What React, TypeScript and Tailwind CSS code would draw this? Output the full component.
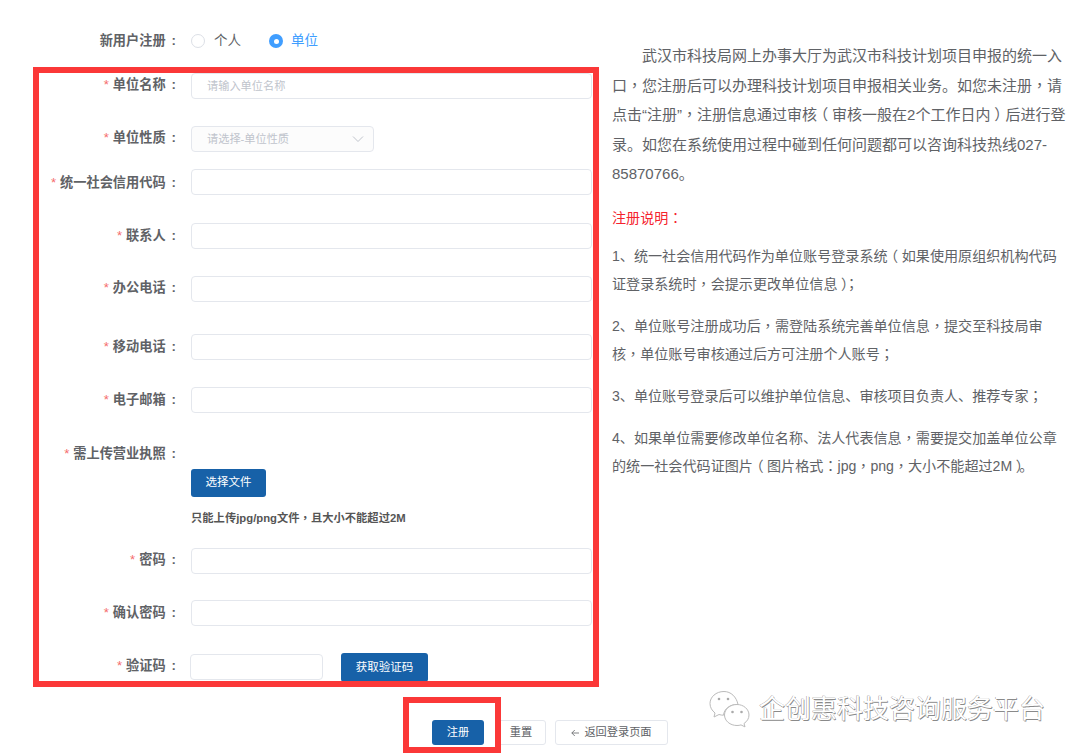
import React from "react";

const F = "font-['Liberation_Sans','Noto_Sans_CJK_SC',sans-serif]";
const TC = "font-['Liberation_Sans','Noto_Sans_CJK_TC',sans-serif]";

// The reference's CJK font centres these marks in their cell.
function Cn({ children }: { children: string }) {
  const parts = children.split(/([，：；（）])/);
  return (
    <>
      {parts.map((p, i) => {
        if (p === "（") return <span key={i} className="ml-[-0.25em] mr-[0.25em]">{p}</span>;
        if (p === "）") return <span key={i} className="ml-[0.25em] mr-[-0.25em]">{p}</span>;
        if (p === "，" || p === "：" || p === "；") return <span key={i} className={TC}>{p}</span>;
        return <React.Fragment key={i}>{p}</React.Fragment>;
      })}
    </>
  );
}

function Label({ text, star = true, lh = "leading-[28px]" }: { text: string; star?: boolean; lh?: string }) {
  return (
    <div className={`w-[178px] shrink-0 pr-[2px] text-right text-[13.2px] font-bold text-[#606266] whitespace-nowrap ${lh}`}>
      {star && <span className="text-[#f56c6c] font-normal mr-[4px]">*</span>}
      {text}
      <span className="ml-[6px]">:</span>
    </div>
  );
}

function Row({ text, mt, lh, children }: { text: string; mt: string; lh?: string; children?: React.ReactNode }) {
  return (
    <div className={`flex h-[26px] items-start gap-[13px] ${mt}`}>
      <Label text={text} lh={lh} />
      {children ?? <div className="h-[26px] w-[401px] rounded-[4px] border border-[#e4e7ed] bg-white" />}
    </div>
  );
}

export default function App() {
  return (
    <div className={`${F} relative h-[756px] w-[1080px] overflow-hidden bg-white`}>
      <div className="flex">
        {/* form */}
        <div className="w-[612px] shrink-0">
          <div className="flex items-center h-[26px] mt-[28px]">
            <Label text="新用户注册" star={false} lh="leading-[26px]" />
            <span className="ml-[13px] h-[14px] w-[14px] rounded-full border border-[#dcdfe6] bg-white" />
            <span className="ml-[9px] text-[13.5px] text-[#606266]">个人</span>
            <span className="ml-[28px] flex h-[14px] w-[14px] items-center justify-center rounded-full bg-[#409eff]">
              <span className="h-[5px] w-[5px] rounded-full bg-white" />
            </span>
            <span className="ml-[8px] text-[13.5px] text-[#409eff]">单位</span>
          </div>

          <Row text="单位名称" mt="mt-[19px]" lh="leading-[24px]">
            <div className="flex h-[26px] w-[401px] items-center rounded-[4px] border border-[#e4e7ed] bg-white pl-[15px] text-[11.2px] text-[#c0c4cc]">
              请输入单位名称
            </div>
          </Row>
          <Row text="单位性质" mt="mt-[27px]" lh="leading-[23px]">
            <div className="flex h-[26px] w-[183px] items-center justify-between rounded-[4px] border border-[#e4e7ed] bg-[#fcfcfc] pl-[15px] pr-[9px] text-[11.2px] text-[#c0c4cc]">
              请选择-单位性质
              <svg width="12" height="12" viewBox="0 0 12 12" fill="none" stroke="#c0c4cc" strokeWidth="1">
                <path d="M1 3.500 L6 8.500 L11 3.500" />
              </svg>
            </div>
          </Row>
          <Row text="统一社会信用代码" mt="mt-[17px]" />
          <Row text="联系人" mt="mt-[28px]" lh="leading-[25px]" />
          <Row text="办公电话" mt="mt-[27px]" lh="leading-[23px]" />
          <Row text="移动电话" mt="mt-[32px]" lh="leading-[25px]" />
          <Row text="电子邮箱" mt="mt-[27px]" lh="leading-[25px]" />
          <Row text="需上传营业执照" mt="mt-[27px]">
            <div className="w-[401px]" />
          </Row>
          <div className="ml-[191px] mt-[3px] flex h-[28px] w-[75px] items-center justify-center rounded-[3px] bg-[#1761a8] text-[11.5px] text-white">
            选择文件
          </div>
          <div className="ml-[191px] mt-[13px] h-[16px] text-[11.3px] font-bold leading-[16px] text-[#555] whitespace-nowrap">
            <Cn>只能上传jpg/png文件，且大小不能超过2M</Cn>
          </div>
          <Row text="密码" mt="mt-[22px]" lh="leading-[23px]" />
          <Row text="确认密码" mt="mt-[26px]" lh="leading-[25px]" />
          <div className="flex h-[26px] items-start mt-[28px]">
            <Label text="验证码" lh="leading-[23px]" />
            <div className="ml-[12px] h-[26px] w-[133px] rounded-[4px] border border-[#e4e7ed] bg-white" />
            <div className="ml-[18px] mt-[-1px] flex h-[29px] w-[87px] items-center justify-center rounded-[3px] bg-[#1761a8] text-[11.5px] text-white">
              获取验证码
            </div>
          </div>
          <div className="mt-[40px] ml-[432px] flex items-center text-[11.2px]">
            <div className="flex h-[25px] w-[52px] shrink-0 items-center justify-center rounded-[3px] bg-[#1761a8] text-white">注册</div>
            <div className="ml-[14px] flex h-[25px] w-[48px] shrink-0 items-center justify-center rounded-[3px] border border-[#e4e7ed] bg-white pr-[2px] text-[#606266]">重置</div>
            <div className="ml-[9px] flex h-[25px] w-[113px] shrink-0 items-center justify-center gap-[5px] rounded-[3px] border border-[#e4e7ed] bg-white text-[#606266]">
              <svg width="8" height="8" viewBox="0 0 8 8" fill="none" stroke="#606266" strokeWidth="0.8">
                <path d="M8 4 H0.800 M3.800 1 L0.800 4 L3.800 7" />
              </svg>
              返回登录页面
            </div>
          </div>
        </div>

        {/* notice */}
        <div className="w-[456px] shrink-0 pt-[41px] text-[#606266]">
          <p className="indent-[30px] text-[15px] leading-[29.5px]">
            <Cn>武汉市科技局网上办事大厅为武汉市科技计划项目申报的统一入口，您注册后可以办理科技计划项目申报相关业务。如您未注册，请点击“注册”，注册信息通过审核（审核一般在2个工作日内）后进行登录。如您在系统使用过程中碰到任何问题都可以咨询科技热线027-85870766。</Cn>
          </p>
          <div className="text-[14.1px]">
            <p className="mt-[15px] leading-[28px] text-[#f5222d]"><Cn>注册说明：</Cn></p>
            <p className="mt-[10px] leading-[28px]"><Cn>1、统一社会信用代码作为单位账号登录系统（如果使用原组织机构代码证登录系统时，会提示更改单位信息）；</Cn></p>
            <p className="mt-[14px] leading-[28px]"><Cn>2、单位账号注册成功后，需登陆系统完善单位信息，提交至科技局审核，单位账号审核通过后方可注册个人账号；</Cn></p>
            <p className="mt-[14px] leading-[28px]"><Cn>3、单位账号登录后可以维护单位信息、审核项目负责人、推荐专家；</Cn></p>
            <p className="mt-[14px] leading-[28px]"><Cn>4、如果单位需要修改单位名称、法人代表信息，需要提交加盖单位公章的统一社会代码证图片（图片格式：jpg，png，大小不能超过2M）。</Cn></p>
          </div>
        </div>
      </div>

      {/* red annotation boxes */}
      <div className="pointer-events-none absolute left-[33px] top-[67px] h-[620px] w-[566px] border-[6px] border-[#fb3838]" />
      <div className="pointer-events-none absolute left-[403px] top-[697px] h-[56px] w-[98px] border-[6px] border-[#fb3838]" />

      {/* watermark */}
      <div className="absolute left-[708px] top-[690px] flex items-center gap-[7px]">
        <svg width="44" height="38" viewBox="0 0 44 38" fill="#fff" stroke="#bbb" strokeWidth="1">
          <path d="M16 1.500C8 1.500 2 7 2 13.500c0 4 2 7 5 9.500l-1 4 5-2.500c1.500.5 3 .7 4.500.7C16 19 22 14 30 14.500 28.500 7 23 1.500 16 1.500z" />
          <path d="M29 14.500c-7 0-12.500 4.700-12.500 10.500S22 35.500 29 35.500c1.500 0 2.800-.2 4-.6l4 2-1-3.400c3-2 5-5 5-8.500 0-5.800-5.500-10.500-12-10.500z" />
          <circle cx="11" cy="9" r="1.300" fill="#aaa" stroke="none" />
          <circle cx="20" cy="9" r="1.300" fill="#aaa" stroke="none" />
          <circle cx="24.500" cy="22" r="1.300" fill="#aaa" stroke="none" />
          <circle cx="33.500" cy="22" r="1.300" fill="#aaa" stroke="none" />
        </svg>
        <span className="text-[26px] leading-[36px] text-white whitespace-nowrap [text-shadow:0.7px_0.7px_0_#8a8a8a,-0.5px_0_0_#a5a5a5,0_-0.5px_0_#a5a5a5]">
          企创惠科技咨询服务平台
        </span>
      </div>
    </div>
  );
}
